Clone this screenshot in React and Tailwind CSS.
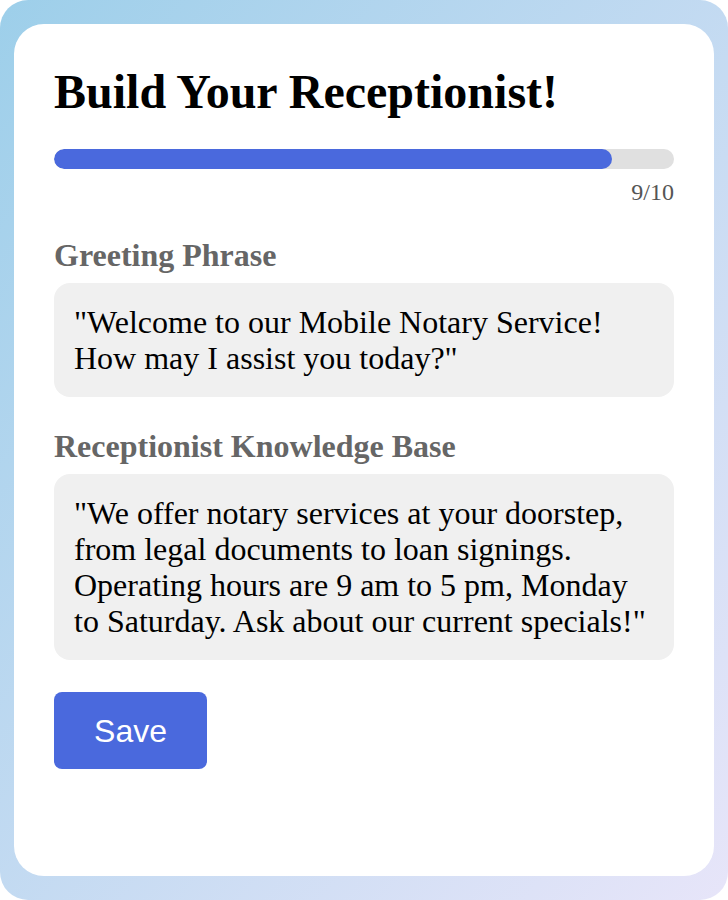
export default function App() {
  const step = 9;
  const total = 10;

  return (
    <div className="w-[728px] h-[900px] bg-white">
      <div className="w-full h-full rounded-[28px] bg-gradient-to-br from-[#9dcfea] to-[#e7e5f9] px-[14px] pt-[24px] pb-[24px]">
        <div className="h-full bg-white rounded-[30px] px-[40px] pt-[40px] font-['Liberation_Serif',serif]">
          <h1 className="text-[48px] leading-[56px] font-bold text-black">Build Your Receptionist!</h1>

          <div className="mt-[29px] h-[20px] w-full rounded-full bg-[#e0e0e0] overflow-hidden">
            <div className="h-full rounded-full bg-[#4a69dd]" style={{ width: `${(step / total) * 100}%` }} />
          </div>
          <p className="mt-[9px] text-right text-[24px] leading-[28px] text-[#555]">{step}/{total}</p>

          <h2 className="mt-[31px] text-[32px] leading-[36px] font-bold text-[#666]">Greeting Phrase</h2>
          <div className="mt-[10px] rounded-[16px] bg-[#f0f0f0] px-[20px] py-[21px] text-[32px] leading-[36px] text-black">
            "Welcome to our Mobile Notary Service! How may I assist you today?"
          </div>

          <h2 className="mt-[31px] text-[32px] leading-[36px] font-bold text-[#666]">Receptionist Knowledge Base</h2>
          <div className="mt-[10px] rounded-[16px] bg-[#f0f0f0] px-[20px] py-[21px] text-[32px] leading-[36px] text-black">
            "We offer notary services at your doorstep, from legal documents to loan signings. Operating hours are 9 am to 5 pm, Monday to Saturday. Ask about our current specials!"
          </div>

          <button className="mt-[32px] w-[153px] h-[77px] rounded-[8px] bg-[#4a69dd] text-white text-[32px] font-['Liberation_Sans',sans-serif]">
            Save
          </button>
        </div>
      </div>
    </div>
  );
}
